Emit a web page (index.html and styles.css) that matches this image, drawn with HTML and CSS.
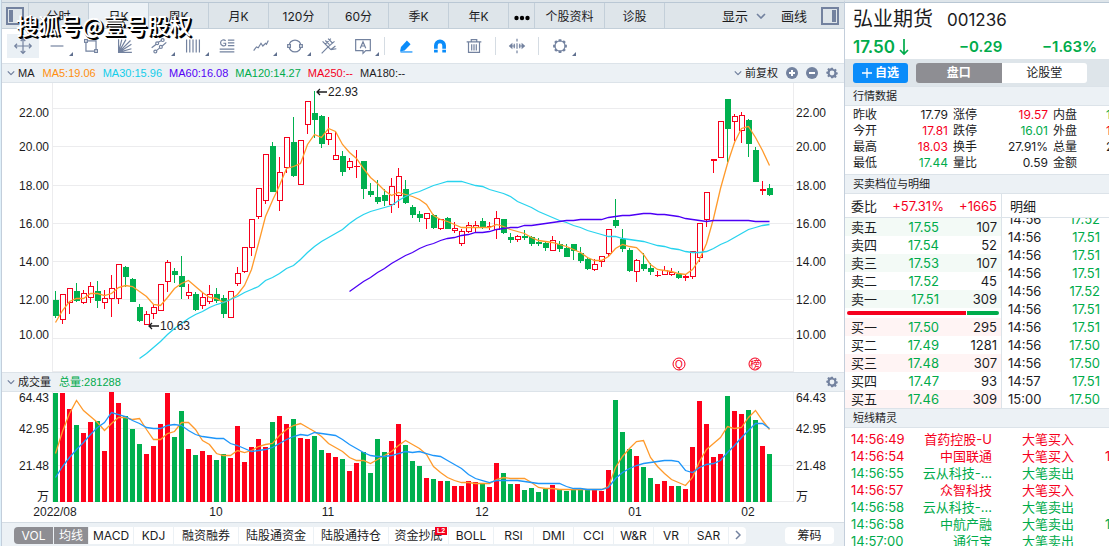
FILE: index.html
```html
<!DOCTYPE html>
<html lang="zh-CN">
<head>
<meta charset="utf-8">
<title>弘业期货 001236</title>
<link rel="stylesheet" href="styles.css">
</head>
<body>
<svg class="defs" aria-hidden="true">
  <symbol id="gear" viewBox="0 0 16 16">
    <path fill="currentColor" fill-rule="evenodd" d="M6.7 1h2.6l.4 1.8 1.2.5 1.6-1 1.8 1.8-1 1.6.5 1.2 1.8.4v2.4l-1.8.5-.5 1.2 1 1.6-1.8 1.8-1.6-1-1.2.5L9.3 15H6.7l-.4-1.7-1.2-.5-1.6 1L1.700 12l1-1.600-.5-1.200L.4 8.700V6.300l1.800-.4.500-1.200-1-1.600L3.500 1.300l1.600 1 1.200-.500zM8 4.800a3.200 3.200 0 1 0 0 6.400 3.200 3.200 0 0 0 0-6.400z"/>
  </symbol>
  <symbol id="chevron" viewBox="0 0 10 6"><path d="M1 1l4 4 4-4" fill="none" stroke="currentColor" stroke-width="1.6"/></symbol>
</svg>
<div class="app">
  <main class="main">
    <nav class="tabs">
      <button class="tab tab-side" aria-label="左侧栏"><svg class="side-icon" viewBox="0 0 18 18"><rect x="1" y="1" width="16" height="16" fill="none" stroke="#73829f" stroke-width="2"/><rect x="3" y="3" width="4" height="12" fill="#73829f"/></svg></button>
      <button class="tab">分时</button>
      <button class="tab tab-on">日K</button>
      <button class="tab">周K</button>
      <button class="tab">月K</button>
      <button class="tab">120分</button>
      <button class="tab">60分</button>
      <button class="tab">季K</button>
      <button class="tab">年K</button>
      <button class="tab tab-more" aria-label="更多"><svg viewBox="0 0 16 6" width="16" height="6"><circle cx="2.500" cy="3" r="2.200"/><circle cx="8" cy="3" r="2.200"/><circle cx="13.500" cy="3" r="2.200"/></svg></button>
      <button class="tab tab-wide">个股资料</button>
      <button class="tab">诊股</button>
      <div class="tab-tools">
        <button class="tool-text">显示<svg class="chev" viewBox="0 0 10 6"><use href="#chevron"/></svg></button>
        <button class="tool-text">画线</button>
        <button class="side-btn" aria-label="右侧栏"><svg class="side-icon" viewBox="0 0 18 18"><rect x="1" y="1" width="16" height="16" fill="none" stroke="#73829f" stroke-width="2"/><rect x="11" y="3" width="4" height="12" fill="#73829f"/></svg></button>
      </div>
    </nav>
    <div class="watermark">搜狐号@壹号股权</div>

    <div class="toolbar">
      <button class="draw draw-on" aria-label="移动"><svg viewBox="0 0 24 24"><path d="M12 4v16M3 12h18M9.500 6.500L12 4l2.500 2.500M9.500 17.500L12 20l2.500-2.500M5.500 9.500L3 12l2.500 2.500M18.500 9.500L21 12l-2.500 2.500"/></svg></button>
      <button class="draw more" aria-label="直线"><svg viewBox="0 0 24 24"><path d="M5 12h14"/></svg></button>
      <button class="draw" aria-label="矩形"><svg viewBox="0 0 24 24"><path d="M8 6.500h9.500V16M16 17.500H6.500V8"/><rect x="5" y="5" width="3" height="3"/><rect x="16" y="16" width="3" height="3"/></svg></button>
      <button class="draw" aria-label="扇形线"><svg viewBox="0 0 24 24"><path d="M5 4.500V19h14.500M5 19L8.500 5M5 19L13 5M5 19L18 6M5 19L19 10M5 19l14-4"/></svg></button>
      <button class="draw more" aria-label="平行线"><svg viewBox="0 0 24 24"><path d="M4 14l5-4M11.200 8l3.600-2M9.200 17l3.600-3M15.500 12l4.500-4"/><circle cx="10" cy="9" r="1.600"/><circle cx="16" cy="5.500" r="1.600"/><circle cx="14" cy="13" r="1.600"/><circle cx="8" cy="18" r="1.600"/></svg></button>
      <button class="draw more" aria-label="竖线"><svg viewBox="0 0 24 24"><path d="M5 5v14M8.500 5v14M12 5v14M15.500 5v14M19 5v14"/></svg></button>
      <button class="draw" aria-label="黄金线"><svg viewBox="0 0 24 24"><path d="M13 5.500h7M13 8.500h7M4 15.500h16M4 18.500h16M13 11.500h7M10.500 6.500C9 4.500 5 5 5 8.500S9 12.500 10.500 11V9H8"/></svg></button>
      <button class="draw more" aria-label="趋势"><svg viewBox="0 0 24 24"><path d="M4 17l3-4 2 1 3-5 2 3 3-3 1 1 2-4"/></svg></button>
      <button class="draw more" aria-label="圆形"><svg viewBox="0 0 24 24"><circle cx="12" cy="12" r="6.500"/><rect x="4" y="10.500" width="3" height="3" fill="#fff"/><rect x="17" y="10.500" width="3" height="3" fill="#fff"/></svg></button>
      <button class="draw" aria-label="叉线"><svg viewBox="0 0 24 24"><path d="M4 20l7-7M8 10l6 6M5 7l4 4M8 6l4.500 4.500M11 4l5 5M8 10l6-6M11 13l7-6M14 16l6-1M14 16l5-4"/></svg></button>
      <button class="draw more" aria-label="文字"><svg viewBox="0 0 24 24"><path d="M4 5h16v12h-5l-3 3v-3H4zM9 14.500l3-7 3 7M10 12h4"/></svg></button>
      <span class="sep"></span>
      <button class="draw blue" aria-label="画笔"><svg viewBox="0 0 24 24"><path d="M6 18.500h13"/><path class="solid" d="M5.500 18l1-5 6.500-7 4 4-6.500 7z"/></svg></button>
      <button class="draw blue" aria-label="磁吸"><svg viewBox="0 0 24 24"><path class="thick" d="M7.500 15v-3.500a4.500 4.500 0 0 1 9 0V15M7.500 16V19M16.500 16V19"/></svg></button>
      <button class="draw" aria-label="删除"><svg viewBox="0 0 24 24"><path d="M4 7.500h16M9 7.500V5h6v2.500M6 7.500V19h12V7.500M9.500 10v7M12 10v7M14.500 10v7"/></svg></button>
      <span class="sep"></span>
      <button class="draw" aria-label="展开"><svg viewBox="0 0 24 24"><path d="M12 4v3M12 9v6M12 17v3M5 12h5M14 12h5"/><path class="solid" d="M3 12l4-3.500v7zM21 12l-4-3.500v7z"/><path d="M9 9.500v5M15 9.500v5"/></svg></button>
      <span class="sep"></span>
      <button class="draw more" aria-label="设置"><svg viewBox="0 0 24 24"><circle cx="12" cy="12" r="5.500"/><path class="teeth" d="M12 4.500V7M12 17v2.500M4.500 12H7M17 12h2.500M6.700 6.700l1.500 1.500M15.800 15.800l1.500 1.500M17.300 6.700l-1.500 1.500M8.200 15.800l-1.500 1.500"/></svg></button>
    </div>

    <div class="bar">
      <button class="bar-name"><svg class="chev" viewBox="0 0 10 6"><use href="#chevron"/></svg>MA</button>
      <div class="legend">
        <span class="orange">MA5:19.06</span><span class="cyan">MA30:15.96</span><span class="violet">MA60:16.08</span><span class="green">MA120:14.27</span><span class="red">MA250:--</span><span>MA180:--</span>
      </div>
      <div class="bar-tools">
        <button class="bar-name"><svg class="chev" viewBox="0 0 10 6"><use href="#chevron"/></svg>前复权</button>
        <button class="round" aria-label="放大"><svg viewBox="0 0 12 12"><circle cx="6" cy="6" r="6" fill="#73829f"/><path d="M6 3v6M3 6h6" stroke="#fff" stroke-width="2"/></svg></button>
        <button class="round" aria-label="缩小"><svg viewBox="0 0 12 12"><circle cx="6" cy="6" r="6" fill="#73829f"/><path d="M3 6h6" stroke="#fff" stroke-width="2"/></svg></button>
        <button class="round" aria-label="指标设置"><svg viewBox="0 0 16 16"><use href="#gear"/></svg></button>
      </div>
    </div>

    <section class="chart chart-price">
      <div class="axis axis-left" data-axis="price"></div>
      <div class="plot">
        <svg id="price" viewBox="52 83 742 289" preserveAspectRatio="none"></svg>
        <div class="marks" id="marks"></div>
      </div>
      <div class="axis" data-axis="price"></div>
    </section>

    <div class="bar bar-volume">
      <button class="bar-name"><svg class="chev" viewBox="0 0 10 6"><use href="#chevron"/></svg>成交量</button>
      <span class="green">总量:281288</span>
      <div class="bar-tools"><button class="round" aria-label="成交量设置"><svg viewBox="0 0 16 16"><use href="#gear"/></svg></button></div>
    </div>

    <section class="chart chart-volume">
      <div class="axis axis-left" data-axis="volume"></div>
      <div class="plot"><svg id="volume" viewBox="52 392 742 110" preserveAspectRatio="none"></svg></div>
      <div class="axis" data-axis="volume"></div>
    </section>
    <div class="dates"><div class="dates-in" id="dates"></div></div>

    <footer class="foot">
      <div class="seg">
        <button class="on w40">VOL</button><button class="on w35">均线</button><button class="w45">MACD</button><button class="w40">KDJ</button><button class="w65">融资融券</button><button class="w75">陆股通资金</button><button class="w75">陆股通持仓</button><button class="w60">资金抄底<span class="badge">L2</span></button><button class="w45">BOLL</button><button class="w40">RSI</button><button class="w40">DMI</button><button class="w40">CCI</button><button class="w40">W&amp;R</button><button class="w35">VR</button><button class="w40">SAR</button><button class="w18" aria-label="下一页"><svg viewBox="0 0 6 10" width="6" height="10"><path d="M1 1l4 4-4 4" fill="none" stroke="#73829f" stroke-width="1.500"/></svg></button>
      </div>
      <button class="chips">筹码</button>
    </footer>
  </main>

  <aside class="side">
    <header class="quote">
      <h1>弘业期货<span class="code">001236</span></h1>
      <div class="price"><span class="now">17.50<svg viewBox="0 0 10 18" width="10" height="18"><path d="M5 1v15M1 12l4 4 4-4" fill="none" stroke="currentColor" stroke-width="1.700"/></svg></span><span>−0.29</span><span class="pct">−1.63%</span></div>
    </header>
    <div class="actions">
      <button class="add"><svg viewBox="0 0 10 10" width="10" height="10"><path d="M5 0v10M0 5h10" stroke="#fff" stroke-width="1.300"/></svg>自选</button>
      <div class="switch"><button class="active">盘口</button><button>论股堂</button></div>
    </div>
    <h2>行情数据</h2>
    <table class="stats">
      <tr><th>昨收</th><td>17.79</td><th>涨停</th><td class="red">19.57</td><th>内盘</th><td class="green cut">15万</td></tr>
      <tr><th>今开</th><td class="red">17.81</td><th>跌停</th><td class="green">16.01</td><th>外盘</th><td class="red cut">13万</td></tr>
      <tr><th>最高</th><td class="red">18.03</td><th>换手</th><td>27.91%</td><th>总量</th><td class="cut">28万</td></tr>
      <tr><th>最低</th><td class="green">17.44</td><th>量比</th><td>0.59</td><th>金额</th><td class="cut"></td></tr>
    </table>
    <h2>买卖档位与明细</h2>
    <div class="depth">
      <div class="book">
        <div class="ratio"><span>委比</span><span class="red">+57.31%</span><span class="red">+1665</span></div>
        <table class="asks">
          <tr><th>卖五</th><td>17.55</td><td>107</td></tr>
          <tr><th>卖四</th><td>17.54</td><td>52</td></tr>
          <tr><th>卖三</th><td>17.53</td><td>107</td></tr>
          <tr><th>卖二</th><td>17.52</td><td>45</td></tr>
          <tr><th>卖一</th><td>17.51</td><td>309</td></tr>
        </table>
        <div class="balance"><span class="buy"></span><span class="sell"></span></div>
        <table class="bids">
          <tr><th>买一</th><td>17.50</td><td>295</td></tr>
          <tr><th>买二</th><td>17.49</td><td>1281</td></tr>
          <tr><th>买三</th><td>17.48</td><td>307</td></tr>
          <tr><th>买四</th><td>17.47</td><td>93</td></tr>
          <tr><th>买五</th><td>17.46</td><td>309</td></tr>
        </table>
      </div>
      <div class="ticks">
        <div class="ticks-head">明细</div>
        <div class="ticks-body">
          <table>
            <tr><td>14:56</td><td>17.52</td></tr>
            <tr><td>14:56</td><td>17.51</td></tr>
            <tr><td>14:56</td><td>17.51</td></tr>
            <tr><td>14:56</td><td>17.51</td></tr>
            <tr><td>14:56</td><td>17.52</td></tr>
            <tr><td>14:56</td><td>17.51</td></tr>
            <tr><td>14:56</td><td>17.51</td></tr>
            <tr><td>14:56</td><td>17.50</td></tr>
            <tr><td>14:56</td><td>17.50</td></tr>
            <tr><td>14:57</td><td>17.51</td></tr>
            <tr><td>15:00</td><td>17.50</td></tr>
          </table>
        </div>
      </div>
    </div>
    <h2>短线精灵</h2>
    <table class="alerts">
      <tr class="red"><td>14:56:49</td><td>首药控股-U</td><td>大笔买入</td><td></td></tr>
      <tr class="red"><td>14:56:54</td><td>中国联通</td><td>大笔买入</td><td>1万</td></tr>
      <tr class="green"><td>14:56:55</td><td>云从科技-...</td><td>大笔卖出</td><td></td></tr>
      <tr class="red"><td>14:56:57</td><td>众智科技</td><td>大笔买入</td><td></td></tr>
      <tr class="green"><td>14:56:58</td><td>云从科技-...</td><td>大笔卖出</td><td></td></tr>
      <tr class="green"><td>14:56:58</td><td>中航产融</td><td>大笔卖出</td><td>1万</td></tr>
      <tr class="green"><td>14:57:00</td><td>通行宝</td><td>大笔卖出</td><td></td></tr>
    </table>
  </aside>
</div>
<script src="chart.js"></script>
</body>
</html>
```

FILE: styles.css
```css
* { box-sizing: border-box; }
body {
  margin: 0;
  background: #dff0fa;
  color: #1c1c1e;
  font: 12px/16px Inter, "Noto Sans CJK SC", sans-serif;
}
button { border: 0; padding: 0; margin: 0; background: none; font: inherit; color: inherit; white-space: nowrap; }
table { border-collapse: collapse; table-layout: fixed; }
th, td { padding: 0; font-weight: 400; text-align: left; white-space: nowrap; }
.defs { position: absolute; width: 0; height: 0; }
.red { color: #f5001d; }
.green { color: #00ab4b; }
.orange { color: #ff8f0f; }
.cyan { color: #14cdea; }
.violet { color: #5500f5; }

.app {
  height: 100vh;
  margin-left: 1px;
  border-left: 1px solid #c3cedb;
  display: grid;
  grid-template-columns: minmax(0, 1fr) 265px;
  overflow: hidden;
  background: #fff;
}
.main, .side { border-top: 2px solid #dee5ea; min-width: 0; overflow: hidden; }
.main { display: flex; flex-direction: column; position: relative; }

.tabs { display: flex; height: 27px; background: #dee5ea; border-top: 1px solid #b9c7d4; border-bottom: 1px solid #c3cfd9; flex: none; }
.tab { width: 60px; border-right: 1px solid #c3cfd9; flex: none; padding-top: 2px; }
.tab-side { width: 27px; display: flex; justify-content: center; align-items: center; padding: 0; }
.tab-on { background: #edf2f6; }
.tab-more { width: 26px; }
.tab-wide { width: 70px; }
.tab-tools { margin-left: auto; display: flex; align-items: center; gap: 15px; padding-right: 5px; font-size: 13px; }
.tool-text { display: flex; align-items: center; gap: 8px; }
.side-btn { display: flex; margin-left: -1px; }
.side-icon { width: 18px; height: 18px; }
.chev { width: 10px; height: 6px; color: #73829f; }
.watermark {
  position: absolute; left: 14px; top: 6px; z-index: 1;
  font: 500 22px/32px "Noto Sans CJK SC", sans-serif;
  color: #fff; text-shadow: 1px 1px 0 #000, 2px 2px 0 #000;
  white-space: nowrap;
}

.toolbar { display: flex; align-items: center; height: 34px; padding-left: 4px; flex: none; }
.draw { position: relative; width: 34px; height: 26px; display: flex; justify-content: center; align-items: center; border: 1px solid #fff; color: #73829f; }
.draw svg { width: 22px; height: 22px; fill: none; stroke: #73829f; stroke-width: 1.3; }
.draw-on { background: #eaf0f5; }
.draw .solid { fill: currentColor; stroke: none; }
.draw .thick { stroke-width: 4; }
.draw .teeth { stroke-width: 3; }
.draw.blue svg { stroke: #0a8cfa; color: #0a8cfa; }
.more::after { content: ""; position: absolute; right: 0; bottom: 2px; border: 2px solid transparent; border-right-color: #60708f; border-bottom-color: #60708f; }
.sep { width: 1px; height: 18px; margin: 0 4px; background: #d5dce3; }

.bar { display: flex; align-items: center; gap: 8px; height: 20px; padding: 0 6px 0 5px; background: #ecf1f5; border-top: 1px solid #dce3e9; border-bottom: 1px solid #dce3e9; flex: none; font: 11px/16px "Liberation Sans", "Noto Sans CJK SC", sans-serif; }
.bar-name { display: flex; align-items: center; gap: 3px; }
.bar .chev { width: 8px; }
.legend { display: flex; gap: 7px; }
.bar-tools { margin-left: auto; display: flex; align-items: center; gap: 8px; }
.round { width: 12px; height: 12px; color: #73829f; display: flex; }
.round svg { width: 12px; height: 12px; }

.chart { display: flex; min-height: 0; }
.chart-price { flex: 1 1 0; }
.chart-volume { flex: none; height: 110px; }
.axis, .marks, .dates { font: 12px/14px "Liberation Sans", "Noto Sans CJK SC", sans-serif; }
.axis { position: relative; width: 50px; flex: none; }
.axis span { position: absolute; left: 2px; transform: translateY(-50%); }
.axis-left span { left: auto; right: 3px; }
.plot { position: relative; flex: 1 1 0; min-width: 0; }
.plot > svg { display: block; width: 100%; height: 100%; }
.grid { stroke: #ececee; }
.line { fill: none; stroke-width: 1.3; vector-effect: non-scaling-stroke; }
.line-orange { stroke: #ff9a2b; }
.line-cyan { stroke: #28d3ee; }
.line-violet { stroke: #4d00f5; }
.line-blue { stroke: #1e96fa; }
.up { fill: #fff; stroke: #f5001d; }
.up-fill { fill: #ff001a; }
.down { fill: #00b04f; }
.marks { position: absolute; inset: 0; }
.marks > span { position: absolute; transform: translateY(-50%); white-space: nowrap; display: flex; align-items: center; gap: 1px; }
.marks .ring { width: 13px; height: 13px; border: 1px solid #f5001d; border-radius: 50%; color: #f5001d; justify-content: center; font-size: 10px; transform: translate(-50%, -50%); }
.arrow { width: 11px; height: 8px; fill: none; stroke: #1c1c1e; stroke-width: 1.3; }
.dates { height: 20px; padding: 0 50px; flex: none; }
.dates-in { position: relative; height: 100%; }
.dates-in span { position: absolute; top: 3px; transform: translateX(-50%); }

.foot { display: flex; justify-content: space-between; height: 24px; padding: 4px 10px 2px 12px; background: #ecf1f5; border-top: 1px solid #d5dde4; flex: none; }
.seg { display: flex; gap: 1px; height: 17px; }
.seg button { position: relative; height: 17px; background: #fff; }
.seg .on { background: #8e8e93; color: #fff; }
.seg button:first-child { border-radius: 4px 0 0 4px; }
.seg button:last-child { border-radius: 0 4px 4px 0; }
.w18 { width: 17px; }
.w35 { width: 34px; }
.w40 { width: 39px; }
.w45 { width: 44px; }
.w60 { width: 59px; }
.w65 { width: 64px; }
.w75 { width: 74px; }
.badge { position: absolute; right: 1px; top: 0; width: 12px; background: #f5001d; color: #fff; font: 700 7px/8px "Liberation Sans", sans-serif; }
.chips { width: 49px; height: 17px; background: #fff; border-radius: 4px; }

.side { border-left: 1px solid #c3cedb; font-size: 13px; }
.quote { height: 57px; padding: 0 8px; border-top: 1px solid #b9c7d4; }
h1 { margin: 0; font-size: 20px; line-height: 33px; font-weight: 400; white-space: nowrap; }
.code { font-size: 17px; margin-left: 14px; }
.price { display: grid; grid-template-columns: 106px 83px 1fr; font-size: 15px; line-height: 20px; font-weight: 600; color: #00ab4b; }
.now { display: flex; align-items: center; gap: 4px; font-size: 17px; }
.actions { display: flex; gap: 8px; height: 27px; padding: 4px 8px 3px; background: #dee5ea; }
.add { width: 55px; border-radius: 3px; background: #0a8cfa; color: #fff; font-size: 12px; font-weight: 600; display: flex; align-items: center; justify-content: center; gap: 3px; }
.switch { display: flex; width: 171px; border-radius: 3px; overflow: hidden; background: #fff; font-size: 12px; }
.switch button { flex: 1; }
.switch .active { background: #8e8e93; color: #fff; font-weight: 600; }
h2 { margin: 0; height: 20px; padding: 0 8px; background: #ecf1f5; border-top: 1px solid #dce3e9; border-bottom: 1px solid #dce3e9; font-size: 11px; line-height: 19px; font-weight: 400; }
.stats { width: 300px; margin: 1px 0 3px 8px; font-size: 12px; }
.stats tr { height: 16px; line-height: 16px; }
.stats th { width: 29px; }
.stats td { width: 71px; text-align: right; padding-right: 5px; }
.stats .cut { text-align: left; padding-left: 24px; }
.depth { display: grid; grid-template-columns: 157px 1fr; }
.book { border-right: 1px solid #dce3e9; }
.ratio, .ticks-head { height: 24px; line-height: 24px; border-bottom: 1px solid #dce3e9; }
.ratio { display: flex; justify-content: space-between; padding: 0 4px 0 6px; }
.ticks-head { padding-left: 8px; }
.book table { width: 100%; }
.book tr { height: 18px; line-height: 18px; }
.book th { width: 40px; padding-left: 6px; }
.book td { width: 54px; text-align: right; color: #00ab4b; }
.book td:last-child { width: auto; padding-right: 4px; color: #1c1c1e; }
.asks tr:nth-child(odd) { background: #f3faf6; }
.bids tr:nth-child(odd) { background: #fff4f4; }
.balance { display: flex; height: 4px; margin: 3px 2px; border-radius: 2px; overflow: hidden; gap: 1px; }
.buy { flex: 79; background: #f5001d; }
.sell { flex: 21; background: #00ab4b; }
.ticks { display: flex; flex-direction: column; min-width: 0; }
.ticks-body { height: 190px; display: flex; flex-direction: column; justify-content: flex-end; overflow: hidden; }
.ticks table { width: 100%; flex: none; }
.ticks tr { height: 18px; line-height: 18px; }
.ticks td { padding-left: 6px; }
.ticks td + td { color: #00ab4b; text-align: right; padding: 0 9px 0 0; }
.alerts { width: 300px; margin-top: 3px; }
.alerts tr { height: 17px; line-height: 17px; }
.alerts td { width: 65px; padding-left: 6px; }
.alerts td:nth-child(2) { width: 82px; padding: 0; text-align: right; }
.alerts td:nth-child(3) { width: 113px; padding-left: 30px; }
.alerts td:last-child { padding: 0; }
```

FILE: chart.js
```js
// Each session: direction (U/D), high, body top, body bottom, low on the price scale of the plot.
const sessions = `D291,300,316,318 U294,294,320,324 U288,288,303,314 D283,291,301,302 U290,293,303,304 U282,286,298,303 D281,291,301,308
U290,298,303,309 U275,288,299,317 U264,264,299,304 D266,267,277,287 D278,279,302,302 D304,307,321,322 U311,314,325,325
U305,307,314,319 U284,284,311,311 U260,262,282,292 D268,271,275,283 D256,276,287,299 U284,292,296,299 D292,294,310,311
U293,297,306,309 U285,294,302,304 D288,294,301,303 D295,298,314,318 U291,291,318,318 U267,273,284,286 U247,247,272,273
U219,219,248,256 U188,188,217,219 U154,154,201,204 D142,146,192,192 U157,172,201,211 U137,137,168,173 D117,142,176,177
U140,140,185,185 U101,101,125,134 D91,113,120,138 D115,116,144,148 U117,133,140,145 U132,155,160,160 D151,156,172,176
U158,161,168,170 U150,166,167,178 D161,161,189,199 D183,191,195,197 D180,197,202,204 D189,195,201,206 U178,186,205,213
U168,176,196,208 D180,189,203,204 D205,207,215,218 D211,214,218,222 U213,213,219,229 D214,215,228,229 U219,219,229,230
D217,218,229,229 U222,228,231,233 U229,231,244,246 U222,225,232,233 U221,225,228,232 D218,221,227,229 U222,226,227,230
U211,218,230,239 D219,219,233,234 D233,237,240,243 U235,236,240,242 D230,236,238,240 D236,237,244,246 D238,242,244,246
D242,243,248,251 U236,240,251,251 D241,244,249,252 D244,248,257,257 D244,244,251,260 D247,253,261,263 D257,259,269,270
U259,264,270,271 U256,256,262,267 U229,229,254,257 D199,220,226,228 D229,239,249,252 D248,250,271,272 U259,260,272,282
D253,264,269,271 D263,268,272,275 U271,275,276,277 U266,270,275,275 U268,272,275,276 D271,274,278,279 U274,276,278,281
U251,251,277,279 U223,223,258,262 U192,192,220,227 U159,159,161,173 U121,121,158,158 D99,99,129,162 U114,116,122,141
U112,115,131,143 D119,120,144,157 D147,150,182,182 U181,189,191,195 D184,188,195,196`.split(/\s+/)
  .map(s => [s[0], ...s.slice(1).split(',').map(Number)]);

const ma5 = [322,310,301,298,298,293,293,295,293,287,285,286,291,296,304,305,297,288,283,280,286,292,297,298,302,299,294,285,269,243,216,200,185,168,166,163,144,134,137,128,131,144,152,158,168,177,183,190,195,192,194,196,199,204,215,219,221,224,227,227,227,227,227,224,226,229,231,233,237,240,241,242,244,246,249,252,257,260,260,256,248,244,246,247,254,264,269,270,271,273,274,269,259,243,218,188,163,142,128,126,137,150,165];
const ma30 = [358,353,347,341,334,328,323,318,314,311,307,304,302,299,296,292,289,286,280,277,273,268,265,259,252,246,241,237,233,229,223,218,214,211,209,207,205,200,196,193,191,188,185,183,181,181,181,183,185,186,189,191,193,196,201,204,207,211,214,217,220,222,225,227,230,232,234,236,236,238,239,240,241,243,245,246,248,249,251,252,252,251,248,244,241,237,233,229,227,225,224];
const ma60 = [291,286,281,277,272,268,263,259,255,252,248,245,243,240,238,237,235,234,232,232,231,229,228,227,227,225,225,224,223,222,221,220,220,219,219,219,219,217,216,215,215,214,213,213,214,214,215,216,218,219,220,221,220,220,220,220,220,220,221,221,221];
const volume = [393,393,409,425,433,422,421,451,392,403,416,429,444,454,446,424,393,437,411,449,455,451,455,460,454,458,426,462,447,439,447,422,416,424,419,438,439,436,450,453,457,459,471,463,452,473,439,452,441,424,445,461,466,478,479,481,481,486,486,481,482,484,487,463,473,484,484,490,488,492,489,485,489,491,490,489,489,490,491,470,400,432,449,456,467,478,484,481,486,486,489,447,401,424,457,454,396,411,414,410,420,446,454];
const vol5 = [453,431,413,400,410,416,422,430,423,417,417,419,418,429,439,439,433,431,422,422,429,440,444,453,455,455,450,452,450,446,444,443,435,429,425,423,427,431,436,443,447,451,457,460,460,463,459,455,451,445,440,444,448,454,466,472,477,480,482,482,483,483,483,479,477,478,478,478,482,487,488,488,489,489,489,489,489,489,489,486,467,456,448,441,440,457,466,473,479,482,485,477,461,449,443,437,426,428,427,417,410,420,429];
const vol10 = [477,466,457,449,442,434,427,422,412,414,416,420,423,427,428,428,425,424,425,430,434,436,437,438,438,443,445,448,451,450,449,447,443,439,436,434,435,432,433,434,435,439,444,448,452,455,456,456,455,453,451,452,451,453,455,456,460,464,468,474,478,480,482,480,480,480,480,481,482,483,483,483,483,486,488,488,489,489,489,487,478,472,468,465,463,462,461,460,460,461,470,472,467,464,463,460,452,445,437,430,423,423,428];

const LEFT = 53, STEP = 7;
const rect = (cls, x, y, w, h) => `<rect class="${cls}" x="${x}" y="${y}" width="${w}" height="${h}"/>`;
const polyline = (cls, values, first) =>
  `<polyline class="line ${cls}" points="${values.map((y, i) => `${LEFT + 2.5 + STEP * (first + i)},${y + 0.5}`).join(' ')}"/>`;
const rules = (ys, top, bottom) =>
  ys.map(y => `<path class="grid" d="M52 ${y + 0.5}H794"/>`).join('') +
  `<path class="grid" d="M52.5 ${top}V${bottom}M793.5 ${top}V${bottom}"/>`;

let candles = '';
let bars = '';
sessions.forEach(([dir, high, top, bottom, low], i) => {
  const x = LEFT + STEP * i;
  const up = dir === 'U';
  candles += rect(up ? 'up-fill' : 'down', x + 2, high, 1, Math.max(1, low - high));
  if (up && bottom - top > 2) candles += rect('up', x + 0.5, top + 0.5, 5, bottom - top - 1);
  else candles += rect(up ? 'up-fill' : 'down', x, top, 6, bottom - top);
  bars += rect(up ? 'up-fill' : 'down', x, volume[i], 5, 502 - volume[i]);
});

document.getElementById('price').innerHTML =
  rules([108, 146, 185, 223, 261, 299, 338, 371], 83, 372) + candles +
  polyline('line-orange', ma5, 0) + polyline('line-cyan', ma30, 12) + polyline('line-violet', ma60, 42);
document.getElementById('volume').innerHTML =
  rules([428, 465, 501], 392, 502) + bars + polyline('line-orange', vol5, 0) + polyline('line-blue', vol10, 0);

const axes = {
  price: { top: 83, height: 289, ticks: [['22.00', 113], ['20.00', 147], ['18.00', 186], ['16.00', 224], ['14.00', 262], ['12.00', 300], ['10.00', 335]] },
  volume: { top: 392, height: 110, ticks: [['64.43', 398], ['42.95', 429], ['21.48', 466], ['万', 497]] }
};
document.querySelectorAll('[data-axis]').forEach(el => {
  const axis = axes[el.dataset.axis];
  el.innerHTML = axis.ticks
    .map(([text, y]) => `<span style="top:${(y - axis.top) / axis.height * 100}%">${text}</span>`).join('');
});

const arrow = '<svg class="arrow" viewBox="0 0 11 8"><path d="M11 4H1M4 1L1 4l3 3"/></svg>';
const marks = [[arrow + '22.93', 316, 92, ''], [arrow + '10.63', 148, 326, ''], ['Q', 679, 364, 'ring'], ['榜', 755, 364, 'ring']];
document.getElementById('marks').innerHTML = marks
  .map(([text, x, y, cls]) => `<span class="${cls}" style="left:${(x - 52) / 742 * 100}%;top:${(y - 83) / 289 * 100}%">${text}</span>`).join('');

const dates = [['2022/08', 55], ['10', 216], ['11', 328], ['12', 482], ['01', 635], ['02', 748]];
document.getElementById('dates').innerHTML = dates
  .map(([text, x]) => `<span style="left:${(x - 52) / 742 * 100}%">${text}</span>`).join('');
```
